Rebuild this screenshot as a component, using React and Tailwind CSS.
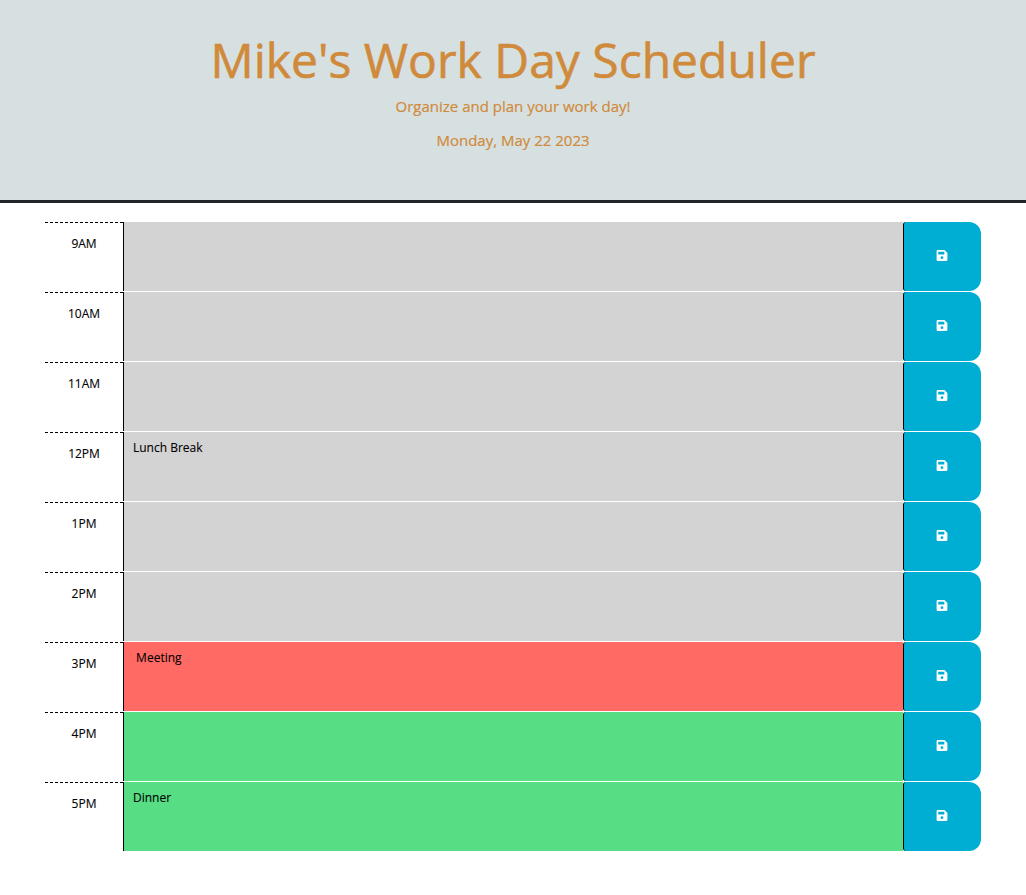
const rows = [
  { hour: "9AM", text: "", tone: "past" },
  { hour: "10AM", text: "", tone: "past" },
  { hour: "11AM", text: "", tone: "past" },
  { hour: "12PM", text: "Lunch Break", tone: "past" },
  { hour: "1PM", text: "", tone: "past" },
  { hour: "2PM", text: "", tone: "past" },
  { hour: "3PM", text: " Meeting", tone: "present" },
  { hour: "4PM", text: "", tone: "future" },
  { hour: "5PM", text: "Dinner", tone: "future" },
];

const tones = {
  past: "bg-[#d3d3d3]",
  present: "bg-[#ff6b64]",
  future: "bg-[#57dd83]",
};

function SaveIcon() {
  return (
    <svg width="12" height="12" viewBox="0 0 12 12" aria-hidden="true">
      <path
        fill="currentColor"
        fillRule="evenodd"
        d="M1.800 1H8.500L11.400 3.900V10.700Q11.400 11.900 10.200 11.900H1.800Q0.600 11.900 0.600 10.700V2.200Q0.600 1 1.800 1ZM2.200 2.700V5.600H8.300V2.700ZM6 7.300A1.400 1.400 0 1 0 6 10.100A1.400 1.400 0 1 0 6 7.300Z"
      />
    </svg>
  );
}

function TimeBlock({ hour, text, tone }) {
  return (
    <div className="flex h-[70px]">
      <div className="w-[78px] border-t border-dashed border-black pt-[12px] text-center leading-[18px]">{hour}</div>
      <div className={`h-[69px] w-[780px] border-l border-black pl-[9px] pt-[7px] leading-[18px] whitespace-pre ${tones[tone]}`}>{text}</div>
      <button aria-label="Save" className="flex h-[69px] w-[78px] items-center justify-center rounded-l-[3px] rounded-r-[12px] border-l border-black bg-[#00aed3] pr-[2px] pb-[3px] text-white">
        <SaveIcon />
      </button>
    </div>
  );
}

export default function App() {
  return (
    <div className="min-h-[895px] bg-white font-['Open_Sans',sans-serif] text-[12px] text-black [-webkit-text-stroke:0.1px_currentColor]">
      <header className="h-[203px] border-b-3 border-[#212529] bg-[#d7e0e0] pt-[31px] text-center text-[#d08a3c]">
        <h1 className="text-[48px] leading-[58px] [-webkit-text-stroke:0.6px_currentColor]">Mike's Work Day Scheduler</h1>
        <p className="mt-[5px] text-[15px] leading-[24px] [-webkit-text-stroke:0.2px_currentColor]">Organize and plan your work day!</p>
        <p className="mt-[10px] text-[15px] leading-[24px] [-webkit-text-stroke:0.2px_currentColor]">Monday, May 22 2023</p>
      </header>
      <main className="mx-[45px] mt-[19px]">
        {rows.map((row) => (
          <TimeBlock key={row.hour} {...row} />
        ))}
      </main>
    </div>
  );
}
